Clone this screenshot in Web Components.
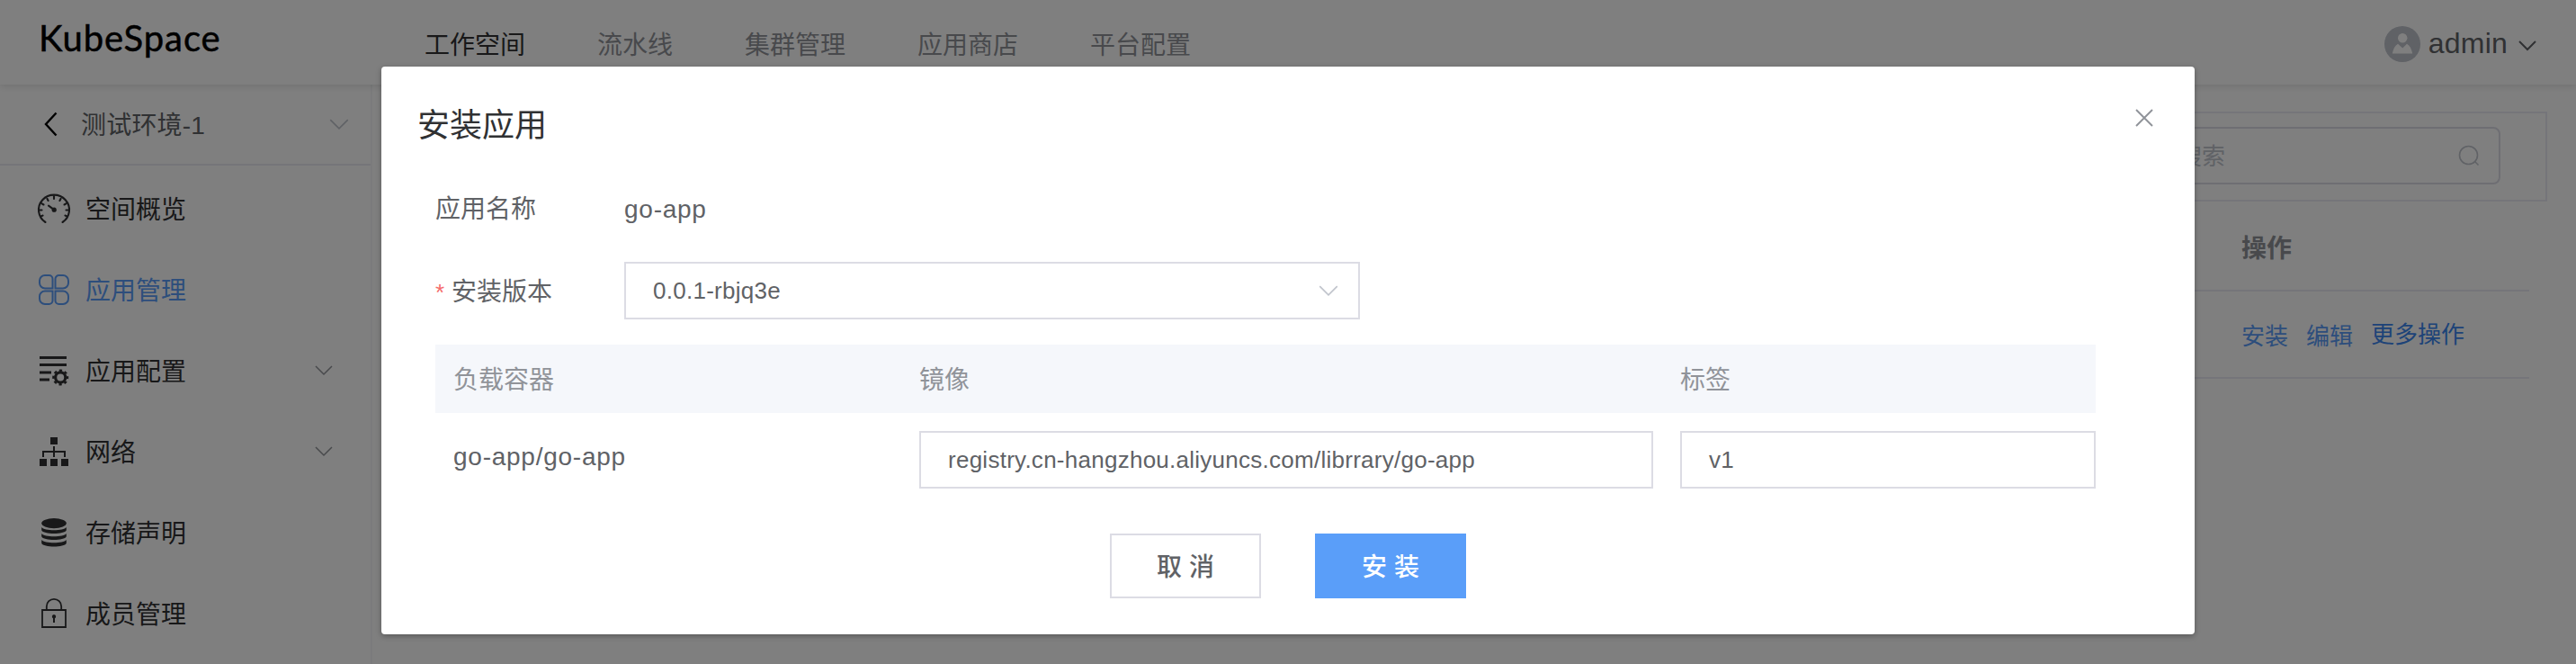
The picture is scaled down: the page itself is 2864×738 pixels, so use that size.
<!DOCTYPE html>
<html lang="zh-CN">
<head>
<meta charset="utf-8">
<title>KubeSpace</title>
<style>
  html, body { margin: 0; height: 738px; overflow: hidden; background: #fff; }
  body { font: 28px/40px "Liberation Sans", "Noto Sans CJK SC", sans-serif; color: #606266; }
</style>
</head>
<body>
<kube-app></kube-app>
<script>
const ICONS = {
  gauge: ['0 -2 36 36', '<g fill="none" stroke="currentColor" stroke-width="2.1" stroke-linecap="round"><path d="M8.500 31A17 16.600 0 1 1 27.500 31"/><path d="M18 2v3M10.400 4.800l1.200 2.200M25.600 4.800l-1.200 2.200M4.200 10.200l2.300 1.300M31.800 10.200l-2.300 1.300M1.500 17.500h3M34.500 17.500h-3M3.200 24.500l2.400-.9M32.800 24.500l-2.400-.9"/><path d="M12 12.700l5.500 4"/></g><circle cx="18.200" cy="17.200" r="2.600" fill="currentColor"/>'],
  grid: ['0 0 36 36', '<g fill="none" stroke="currentColor" stroke-width="2"><path d="M8 2h4.500a4 4 0 0 1 4 4v10.500H8a6 6 0 0 1-6-6V8a6 6 0 0 1 6-6zM28 2h-4.500a4 4 0 0 0-4 4v10.500H28a6 6 0 0 0 6-6V8a6 6 0 0 0-6-6zM8 34h4.500a4 4 0 0 0 4-4V19.500H8a6 6 0 0 0-6 6V28a6 6 0 0 0 6 6zM28 34h-4.500a4 4 0 0 1-4-4V19.500H28a6 6 0 0 1 6 6V28a6 6 0 0 1-6 6z"/></g>'],
  config: ['0 0 36 36', '<path fill="currentColor" d="M2 2h30v3H2zM2 10h30v3H2zM2 18.500h13v3H2zM2 26.500h11v3H2z"/><g fill="none" stroke="currentColor"><circle cx="25.200" cy="25.500" r="5.600" stroke-width="3.200"/><circle cx="25.200" cy="25.500" r="7.800" stroke-width="2.400" stroke-dasharray="3.200 2.926" stroke-dashoffset="1.600"/></g>'],
  network: ['0 0 36 36', '<path fill="currentColor" d="M14 2h8v8h-8zM2 26h8v8H2zM14 26h8v8h-8zM26 26h8v8h-8zM17 12h2v5h12v7h-2v-5H19v5h-2v-5H7v5H5v-7h12z"/>'],
  storage: ['0 0 36 36', '<g fill="currentColor"><ellipse cx="18" cy="7.600" rx="13.800" ry="5.600"/><path d="M4.200 12c3 4.400 24.600 4.400 27.600 0v3.200c-2 5-25.600 5-27.600 0zM4.200 19c3 4.400 24.600 4.400 27.600 0v3.200c-2 5-25.600 5-27.600 0zM4.200 26c3 4.400 24.600 4.400 27.600 0v3.700c-2 5-25.600 5-27.600 0z"/></g>'],
  lock: ['0 0 36 36', '<g fill="none" stroke="currentColor" stroke-width="1.800"><path d="M5 14h26v19H5z"/><path d="M9.800 14V10a8.200 8.200 0 0 1 16.400 0v4"/></g><path fill="currentColor" d="M18 19a2.300 2.300 0 0 1 1 4.300V28h-2v-4.700a2.300 2.300 0 0 1 1-4.300z"/>'],
  down: ['0 0 20 12', '<path fill="none" stroke="currentColor" stroke-width="var(--stroke, 1.500)" d="M1 1l9 9 9-9"/>'],
  back: ['0 0 16 28', '<path fill="none" stroke="currentColor" stroke-width="2.400" d="M14.500 1.500L3 14l11.500 12.500"/>'],
  close: ['0 0 20 20', '<path fill="none" stroke="currentColor" stroke-width="1.900" d="M1 1l18 18M19 1L1 19"/>'],
  search: ['0 0 24 24', '<g fill="none" stroke="currentColor" stroke-width="1.600"><circle cx="11.500" cy="11.500" r="10"/><path d="M18.500 18.500l4 4"/></g>'],
  user: ['0 0 40 40', '<circle cx="20" cy="20" r="20" fill="#c0c4cc"/><g fill="#fff"><circle cx="20.200" cy="13.200" r="5.200"/><path d="M8.800 30.500c1-5 3-9 6.200-10.700l5.200 4.700 4.800-4.700c3.200 1.700 5.200 5.700 6.200 10.700z"/></g>']
};

customElements.define('kube-icon', class extends HTMLElement {
  static observedAttributes = ['name'];
  constructor() {
    super();
    this.attachShadow({ mode: 'open' });
  }
  attributeChangedCallback() {
    const [box, body] = ICONS[this.getAttribute('name')];
    this.shadowRoot.innerHTML = `<style>
      :host { display: block; flex: none; }
      svg { display: block; width: 100%; height: 100%; overflow: visible; }
    </style><svg viewBox="${box}">${body}</svg>`;
  }
});

function define(name, html, setup) {
  const template = document.createElement('template');
  template.innerHTML = html;
  customElements.define(name, class extends HTMLElement {
    constructor() {
      super();
      this.attachShadow({ mode: 'open' }).append(template.content.cloneNode(true));
    }
    connectedCallback() { if (setup) setup(this, this.shadowRoot); }
  });
}

define('kube-header', `<style>
  :host { display: flex; height: 94px; box-sizing: border-box; padding: 0 44px 0 43px; align-items: flex-start;
    box-shadow: 0 2px 8px rgba(0,0,0,.12); position: relative; background: #fff; }
  .logo { width: 429px; font: 400 40px/48px Lato, sans-serif; color: #000; padding-top: 18px; -webkit-text-stroke: .5px #000; letter-spacing: .95px; }
  nav { display: flex; gap: 80px; padding-top: 31px; color: #909399; flex: 1; }
  nav .on { color: #303133; }
  .user { display: flex; align-items: center; padding-top: 29px; font-size: 32px; color: #606266; }
  .user span { margin: 0 12px 0 9px; line-height: 38px; height: 40px; letter-spacing: .2px; }
</style>
<div class="logo">KubeSpace</div>
<nav><span class="on">工作空间</span><span>流水线</span><span>集群管理</span><span>应用商店</span><span>平台配置</span></nav>
<div class="user"><kube-icon name="user" style="width:40px;height:40px"></kube-icon><span>admin</span><kube-icon name="down" style="width:20px;height:12px;margin-top:3px;--stroke:2"></kube-icon></div>`);

define('kube-menu-item', `<style>
  :host { display: flex; align-items: center; height: 90px; padding: 0 42px 0 42px; color: #303133; }
  :host([active]) { color: #5a9cf8; }
  .label { flex: 1; margin: 4px 0 0 17px; }
  .arrow { width: 20px; height: 12px; color: #909399; }
</style><kube-icon style="width:36px;height:36px"></kube-icon><span class="label"><slot></slot></span>`, (el, root) => {
  root.querySelector('kube-icon').setAttribute('name', el.getAttribute('icon'));
  if (el.hasAttribute('expandable')) {
    const arrow = document.createElement('kube-icon');
    arrow.className = 'arrow';
    arrow.setAttribute('name', 'down');
    root.append(arrow);
  }
});

define('kube-sidebar', `<style>
  :host { display: block; width: 412px; border-right: 2px solid #f6f7f8; flex: none; }
  .env { display: flex; align-items: center; height: 88px; border-bottom: 2px solid #ebebf2; padding: 0 24px 0 48px; color: #606266; }
  .env span { flex: 1; margin: 4px 0 0 26px; letter-spacing: .2px; }
  .menu { padding-top: 3px; }
</style>
<div class="env"><kube-icon name="back" style="width:16px;height:28px;color:#000"></kube-icon><span>测试环境-1</span><kube-icon name="down" style="width:22px;height:13px;color:#c0c4cc"></kube-icon></div>
<div class="menu">
<kube-menu-item icon="gauge">空间概览</kube-menu-item>
<kube-menu-item icon="grid" active>应用管理</kube-menu-item>
<kube-menu-item icon="config" expandable>应用配置</kube-menu-item>
<kube-menu-item icon="network" expandable>网络</kube-menu-item>
<kube-menu-item icon="storage">存储声明</kube-menu-item>
<kube-menu-item icon="lock">成员管理</kube-menu-item>
</div>`);

define('kube-workspace', `<style>
  :host { display: block; flex: 1; padding: 30px 32px 0 30px; }
  .bar { height: 100px; box-sizing: border-box; border: 2px solid #ebebf5; display: flex; justify-content: flex-end; padding: 15px 50px 0 0; }
  .search { width: 400px; height: 64px; box-sizing: border-box; border: 2px solid #dcdce6; border-radius: 8px; display: flex; align-items: center; justify-content: space-between; padding: 0 21px 0 40px; font-size: 26px; color: #c0c4cc; }
  .search span { padding-top: 2px; }
  .table { margin-right: 20px; }
  .row { display: flex; justify-content: flex-end; align-items: center; border-bottom: 2px solid #ebebf5; box-sizing: border-box; }
  .head { height: 100px; padding-top: 7px; font-weight: 700; color: #909399; }
  .body { height: 97px; padding-top: 5px; font-size: 26px; color: #5a9cf8; }
  .cell { width: 320px; display: flex; gap: 20px; }
  .more { color: #3a86f0; margin-top: -2px; }
</style>
<div class="bar"><div class="search"><span>搜索</span><kube-icon name="search" style="width:24px;height:24px"></kube-icon></div></div>
<div class="table">
<div class="row head"><div class="cell">操作</div></div>
<div class="row body"><div class="cell"><span>安装</span><span>编辑</span><span class="more">更多操作</span></div></div>
</div>`);

define('kube-input', `<style>
  :host { display: flex; align-items: center; justify-content: space-between; height: 64px; box-sizing: border-box;
    border: 2px solid #dcdce4; padding: 0 22px 0 30px; font-size: 26px; letter-spacing: .26px; color: #606266; background: #fff; }
</style><span><slot></slot></span><slot name="suffix"></slot>`);

define('kube-button', `<style>
  :host { display: flex; align-items: center; justify-content: center; width: 168px; height: 72px; box-sizing: border-box;
    border: 2px solid #dcdce4; padding-top: 3px; font-weight: 500; color: #606266; background: #fff; }
  :host([primary]) { background: #5a9ef9; border-color: #5a9ef9; color: #fff; }
</style><span><slot></slot></span>`);

define('kube-dialog', `<style>
  :host { display: block; position: absolute; left: 424px; top: 74px; width: 2016px; height: 631px; box-sizing: border-box;
    background: #fff; border-radius: 4px; box-shadow: 0 2px 6px rgba(0,0,0,.3); padding: 40px 110px 0 60px; }
  header { display: flex; justify-content: space-between; height: 48px; margin: 0 -64px 0 -20px; font-size: 36px; line-height: 52px; color: #303133; }
  .field { display: grid; grid-template-columns: 210px 818px; align-items: center; }
  .version > :first-child { padding-top: 3px; }
  .name { height: 40px; margin-top: 50px; }
  .name > :first-child { line-height: 42px; }
  .name > :last-child { line-height: 38px; }
  .version { height: 64px; margin-top: 39px; }
  .req { color: #f56c6c; display: inline-block; width: 18px; font-size: 26px; }
  .cols { display: grid; grid-template-columns: 538px 816px 462px; }
  .cols > :nth-child(3) { margin-left: 30px; margin-right: -30px; }
  .head { margin-top: 28px; height: 76px; line-height: 79px; background: #f5f7fb; color: #909399; }
  .head > :first-child, .line > :first-child { padding-left: 20px; }
  .line { margin-top: 20px; height: 64px; }
  .line > :first-child { line-height: 58px; }
  .spaced { letter-spacing: .75px; }
  footer { display: flex; justify-content: center; gap: 60px; margin: 50px -50px 0 0; }
</style>
<header><span>安装应用</span><kube-icon name="close" style="width:20px;height:20px;margin-top:7px;color:#909399"></kube-icon></header>
<div class="field name"><span>应用名称</span><span class="spaced">go-app</span></div>
<div class="field version"><span><span class="req">*</span>安装版本</span><kube-input>0.0.1-rbjq3e<kube-icon slot="suffix" name="down" style="width:22px;height:13px;color:#c0c4cc"></kube-icon></kube-input></div>
<div class="cols head"><span>负载容器</span><span>镜像</span><span>标签</span></div>
<div class="cols line"><span class="spaced">go-app/go-app</span><kube-input>registry.cn-hangzhou.aliyuncs.com/librrary/go-app</kube-input><kube-input>v1</kube-input></div>
<footer><kube-button>取 消</kube-button><kube-button primary>安 装</kube-button></footer>`);

define('kube-app', `<style>
  :host { display: block; position: relative; width: 2864px; height: 738px; overflow: hidden; }
  .main { display: flex; height: 644px; }
  .mask { position: absolute; inset: 0; background: rgba(0,0,0,.5); }
</style>
<kube-header></kube-header>
<div class="main"><kube-sidebar></kube-sidebar><kube-workspace></kube-workspace></div>
<div class="mask"></div>
<kube-dialog></kube-dialog>`);
</script>
</body>
</html>
